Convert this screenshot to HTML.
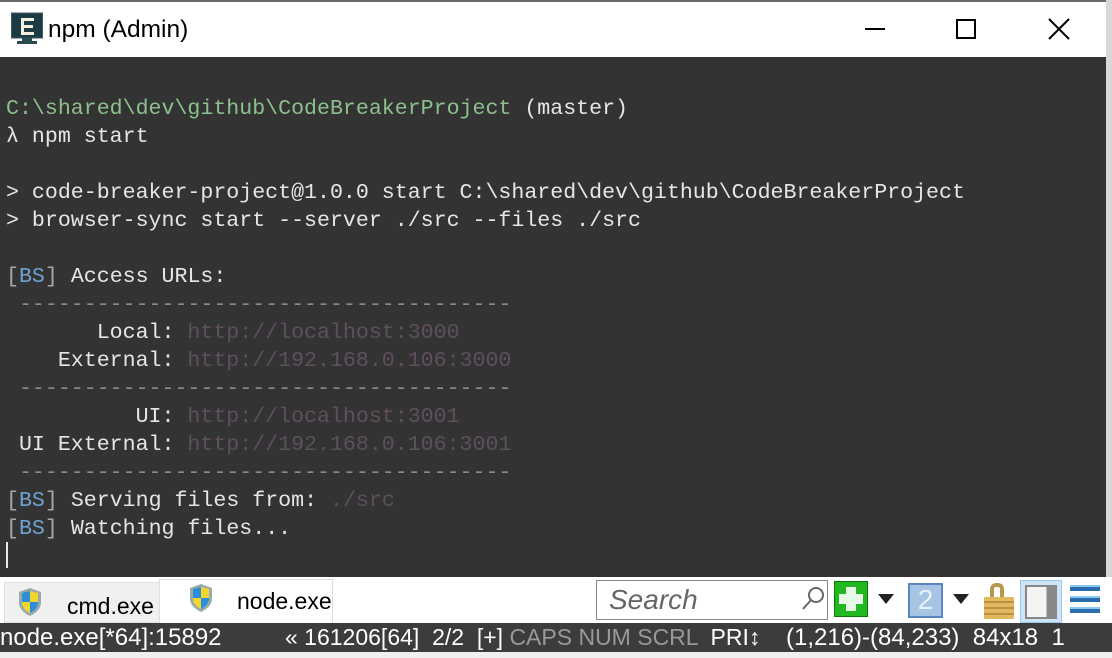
<!DOCTYPE html>
<html><head><meta charset="utf-8"><style>
*{margin:0;padding:0;box-sizing:border-box}
body{width:1112px;height:658px;overflow:hidden;background:#f0f0f0;font-family:"Liberation Sans",sans-serif;position:relative}
.abs{position:absolute}
#title{left:0;top:0;width:1106px;height:57px;background:#fff;border-top:2px solid #6b6b6b}
#term{left:0;top:57px;width:1106px;height:520px;background:#333333}
#rstrip{left:1106px;top:0;width:6px;height:577px;background:#d8d8d8}
pre{position:absolute;left:6px;top:95px;font-family:"Liberation Mono",monospace;font-size:21.6px;line-height:28px;color:#e6e6e6}
.g{color:#8cc08c}.b{color:#6fa3d4}.k{color:#a8a8a8}.u{color:#5e4f5f}.d{color:#8a8a8a}
#tabs{left:0;top:577px;width:1112px;height:46px;background:#fff}
#status{left:0;top:623px;width:1112px;height:29px;background:#3c3c3c;color:#fff;font-size:24px;line-height:29px;white-space:pre}
#bot{left:0;top:652px;width:1112px;height:6px;background:#f0f0f0}
</style></head><body>
<div id="title" class="abs">
 <svg class="abs" style="left:11px;top:10px" width="32" height="34" viewBox="0 0 32 34">
  <rect x="0.5" y="1" width="31" height="25" fill="#1c3b44" stroke="#3f5a62"/>
  <rect x="11" y="26" width="10" height="3" fill="#2a4a52"/><rect x="6" y="29" width="20" height="3" fill="#2a4a52"/>
  <path d="M10 6h13v3H13v4h9v3h-9v4h10v3H10z" fill="#f4f0e0"/>
 </svg>
 <div class="abs" style="left:48px;top:14px;font-size:24.5px;color:#000">npm (Admin)</div>
 <div class="abs" style="left:865px;top:26px;width:20px;height:2px;background:#000"></div>
 <div class="abs" style="left:956px;top:17px;width:20px;height:20px;border:2px solid #000"></div>
 <svg class="abs" style="left:1048px;top:16px" width="22" height="22"><path d="M1 1L21 21M21 1L1 21" stroke="#000" stroke-width="2"/></svg>
</div>
<div id="rstrip" class="abs"></div>
<div id="term" class="abs"></div>
<pre><span class="g">C:\shared\dev\github\CodeBreakerProject</span> (master)
λ npm start

&gt; code-breaker-project@1.0.0 start C:\shared\dev\github\CodeBreakerProject
&gt; browser-sync start --server ./src --files ./src

<span class="k">[</span><span class="b">BS</span><span class="k">]</span> Access URLs:
<span class="d"> --------------------------------------</span>
       Local: <span class="u">http://localhost:3000</span>
    External: <span class="u">http://192.168.0.106:3000</span>
<span class="d"> --------------------------------------</span>
          UI: <span class="u">http://localhost:3001</span>
 UI External: <span class="u">http://192.168.0.106:3001</span>
<span class="d"> --------------------------------------</span>
<span class="k">[</span><span class="b">BS</span><span class="k">]</span> Serving files from: <span class="u">./src</span>
<span class="k">[</span><span class="b">BS</span><span class="k">]</span> Watching files...
</pre>
<div class="abs" style="left:6px;top:542px;width:2px;height:26px;background:#e6e6e6"></div>
<div id="tabs" class="abs">
 <div class="abs" style="left:4px;top:5px;width:156px;height:41px;background:#f0f0f0;border:1px solid #ddd"></div>
 <div class="abs" style="left:159px;top:2px;width:174px;height:44px;background:#fff;border:1px solid #ddd;border-bottom:none"></div>
 <svg class="abs" style="left:17px;top:10px" width="26" height="30" viewBox="0 0 26 30"><path d="M13 1L24 5v10c0 7-5 11-11 14C7 26 2 22 2 15V5z" fill="#9aa" /><path d="M13 4v11H5V6z" fill="#2a8fd8"/><path d="M13 4l8 2v9h-8z" fill="#f2d630"/><path d="M5 15h8v11c-4-2-8-5-8-11z" fill="#f2d630"/><path d="M13 15h8c0 6-4 9-8 11z" fill="#2a8fd8"/></svg>
 <div class="abs" style="left:67px;top:16px;font-size:23px;color:#000">cmd.exe</div>
 <svg class="abs" style="left:188px;top:6px" width="26" height="30" viewBox="0 0 26 30"><path d="M13 1L24 5v10c0 7-5 11-11 14C7 26 2 22 2 15V5z" fill="#9aa" /><path d="M13 4v11H5V6z" fill="#2a8fd8"/><path d="M13 4l8 2v9h-8z" fill="#f2d630"/><path d="M5 15h8v11c-4-2-8-5-8-11z" fill="#f2d630"/><path d="M13 15h8c0 6-4 9-8 11z" fill="#2a8fd8"/></svg>
 <div class="abs" style="left:237px;top:11px;font-size:23px;color:#000">node.exe</div>
 <div class="abs" style="left:596px;top:3px;width:232px;height:40px;border:1px solid #888;background:#fff"></div>
 <div class="abs" style="left:609px;top:7px;font-size:28px;font-style:italic;color:#666">Search</div>
 <svg class="abs" style="left:800px;top:8px" width="26" height="28"><circle cx="16" cy="10" r="7" fill="none" stroke="#666" stroke-width="2"/><path d="M11 15L3 24" stroke="#666" stroke-width="2"/></svg>
 <div class="abs" style="left:834px;top:4px;width:34px;height:36px;background:#22b822;border:1px solid #0a7a0a"></div>
 <div class="abs" style="left:846px;top:10px;width:10px;height:24px;background:#e8f8e8"></div>
 <div class="abs" style="left:839px;top:17px;width:24px;height:10px;background:#e8f8e8"></div>
 <svg class="abs" style="left:878px;top:17px" width="16" height="10"><path d="M0 0h16L8 10z" fill="#222"/></svg>
 <div class="abs" style="left:908px;top:6px;width:35px;height:35px;background:#a8c4e4;border:2px solid #5a86c0;color:#e8f0f8;font-size:28px;text-align:center;line-height:30px">2</div>
 <svg class="abs" style="left:953px;top:17px" width="16" height="10"><path d="M0 0h16L8 10z" fill="#222"/></svg>
 <div class="abs" style="left:990px;top:6px;width:14px;height:16px;border:4px solid #b89850;border-bottom:none;border-radius:6px 6px 0 0"></div>
 <div class="abs" style="left:984px;top:20px;width:30px;height:22px;background:repeating-linear-gradient(#e0b860 0 4px,#c09040 4px 6px)"></div>
 <div class="abs" style="left:1020px;top:3px;width:42px;height:43px;background:#cfe4f8;border:1px solid #99c8f0"></div>
 <div class="abs" style="left:1025px;top:8px;width:32px;height:34px;background:linear-gradient(90deg,#f4f4f4 70%,#888 70%);border:2px solid #888"></div>
 <div class="abs" style="left:1070px;top:8px;width:30px;height:6px;background:#2a6cb0;border-top:2px solid #8cc8f0"></div>
 <div class="abs" style="left:1070px;top:19px;width:30px;height:6px;background:#2a6cb0;border-top:2px solid #8cc8f0"></div>
 <div class="abs" style="left:1070px;top:30px;width:30px;height:6px;background:#2a6cb0;border-top:2px solid #8cc8f0"></div>
</div>
<div id="status" class="abs"><span class="abs" style="left:0">node.exe[*64]:15892</span><span class="abs" style="left:285px;font-size:23px">« 161206[64]  2/2  [+] <span style="color:#999">CAPS NUM SCRL</span>  PRI↕</span><span class="abs" style="left:786px">(1,216)-(84,233)  84x18  1</span></div>
<div id="bot" class="abs"></div>
</body></html>
